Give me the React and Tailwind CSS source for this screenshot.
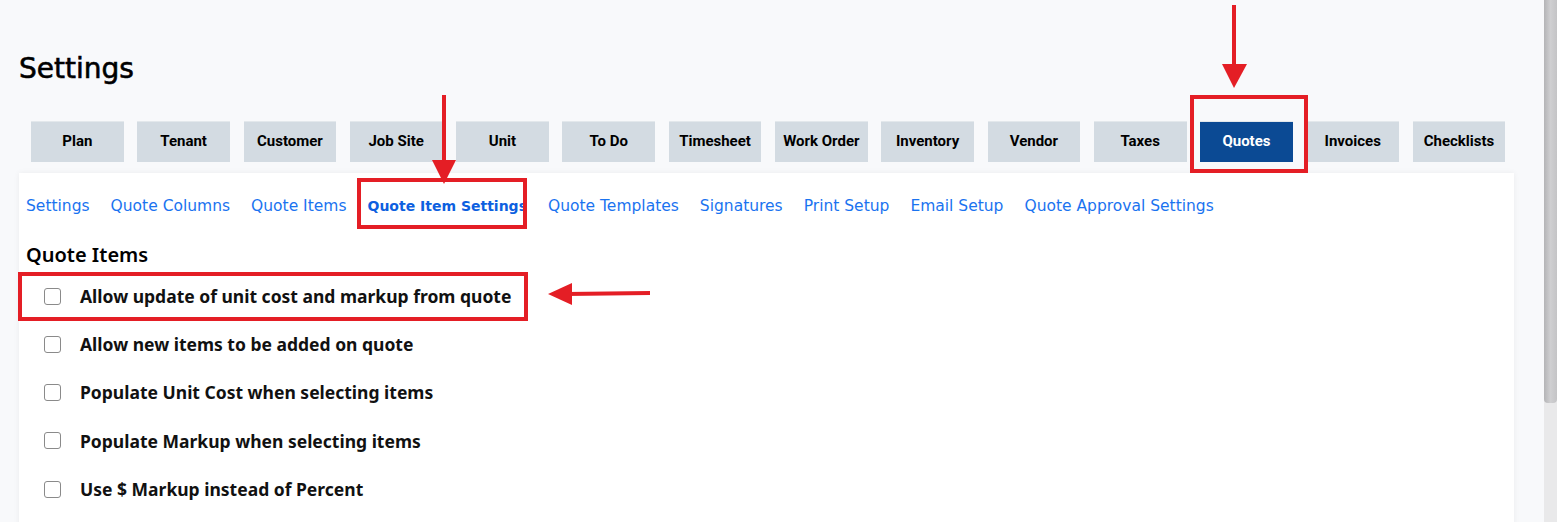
import React, { useState } from "react";

const tabs = [
  "Plan",
  "Tenant",
  "Customer",
  "Job Site",
  "Unit",
  "To Do",
  "Timesheet",
  "Work Order",
  "Inventory",
  "Vendor",
  "Taxes",
  "Quotes",
  "Invoices",
  "Checklists",
];

const subLinks = [
  "Settings",
  "Quote Columns",
  "Quote Items",
  "Quote Item Settings",
  "Quote Templates",
  "Signatures",
  "Print Setup",
  "Email Setup",
  "Quote Approval Settings",
];

const options = [
  "Allow update of unit cost and markup from quote",
  "Allow new items to be added on quote",
  "Populate Unit Cost when selecting items",
  "Populate Markup when selecting items",
  "Use $ Markup instead of Percent",
];

const App = () => {
  const [activeTab, setActiveTab] = useState("Quotes");
  const [activeLink, setActiveLink] = useState("Quote Item Settings");
  const [checked, setChecked] = useState({});

  return (
    <div className="relative flex h-[522px] w-full overflow-hidden bg-[#f8f9fb]">
      <div className="flex-1 pl-[19px] pr-[30px]">
        {/* Page title */}
        <h1 className="pt-[51px] text-[28px] leading-[36px] text-black [-webkit-text-stroke:0.6px_black] font-['DejaVu_Sans',sans-serif]">
          Settings
        </h1>

        {/* Main tabs */}
        <div className="mt-[34px] flex gap-[13.6px] pl-[12px]">
          {tabs.map((tab) => (
            <button
              key={tab}
              onClick={() => setActiveTab(tab)}
              className={`h-[41px] w-[92.7px] shrink-0 border-t border-[#e3e8ec] pb-[2px] text-[15px] font-bold font-['Roboto',sans-serif] ${
                activeTab === tab
                  ? "bg-[#0b4a94] text-white border-[#2c64a6]"
                  : "bg-[#d3dbe2] text-black"
              }`}
            >
              {tab}
            </button>
          ))}
        </div>

        {/* Content card */}
        <div className="mt-[11px] h-[400px] bg-white px-[7px] shadow-[0_0_6px_rgba(0,0,0,0.06)]">
          <div className="flex gap-[21px] pt-[23px] text-[15.5px] leading-[20px] font-['DejaVu_Sans',sans-serif]">
            {subLinks.map((link) => (
              <button
                key={link}
                onClick={() => setActiveLink(link)}
                className={
                  activeLink === link
                    ? "text-[14px] font-bold text-[#0d5fe0]"
                    : "text-[#1a73f0]"
                }
              >
                {link}
              </button>
            ))}
          </div>

          <h3 className="mt-[27px] text-[20px] font-semibold leading-[24px] text-black font-['Noto_Sans',sans-serif]">
            Quote Items
          </h3>

          <div className="mt-[19px] flex flex-col gap-[28.3px] pl-[18px]">
            {options.map((opt, i) => (
              <label
                key={opt}
                className="flex h-[20px] cursor-pointer items-center gap-[19px]"
              >
                <input
                  type="checkbox"
                  checked={!!checked[i]}
                  onChange={() => setChecked({ ...checked, [i]: !checked[i] })}
                  className="h-[17px] w-[17px] shrink-0 appearance-none rounded-[3px] border-[1.5px] border-[#8a8a8a] bg-white checked:bg-[#0d6efd]"
                />
                <span className="text-[17.5px] font-bold text-[#111] font-['Noto_Sans',sans-serif]">
                  {opt}
                </span>
              </label>
            ))}
          </div>
        </div>
      </div>

      {/* Window scrollbar */}
      <div className="flex w-[13px] flex-col bg-[#e9e9ea]">
        <div className="h-[403px] rounded-b-[4px] bg-gradient-to-r from-[#b4b4b6] via-[#cfcfd1] to-[#c4c4c6]" />
      </div>

      {/* Red annotations */}
      <svg
        className="pointer-events-none absolute left-0 top-0"
        width="1557"
        height="522"
        viewBox="0 0 1557 522"
      >
        <g fill="none" stroke="#e41e25" strokeWidth="4">
          <rect x="1192" y="97" width="114" height="74" />
          <rect x="359" y="180" width="166" height="47" />
          <rect x="20" y="274" width="506" height="45" />
          <line x1="444" y1="95" x2="444" y2="166" />
          <line x1="1234" y1="5" x2="1234" y2="70" />
          <line x1="650" y1="293" x2="566" y2="294" />
        </g>
        <g fill="#e41e25">
          <polygon points="432,160 456,160 444,184" />
          <polygon points="1222,64 1247,64 1234,88" />
          <polygon points="548,294 572,283 572,305" />
        </g>
      </svg>
    </div>
  );
};

export default App;
